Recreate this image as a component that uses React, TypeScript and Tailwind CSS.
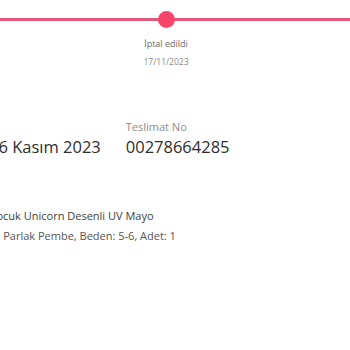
const font = { fontFamily: '"Open Sans", "Liberation Sans", sans-serif' };

const Timeline = () => (
  <div className="relative h-[72px]">
    {/* progress line */}
    <div className="absolute left-0 right-0 top-[18px] h-[3px] bg-[#e05a7c]" />
    <div className="absolute left-[158px] top-[11px] w-[17px] h-[17px] rounded-full bg-[#f7466c]" />
    <div className="absolute left-[116px] top-[37px] w-[100px] text-center">
      <p className="text-[9px] leading-[14px] text-[#6b6b6b]">İptal edildi</p>
      <p className="mt-[4px] text-[8.5px] leading-[14px] text-[#8a8a8a]">17/11/2023</p>
    </div>
  </div>
);

export default function App() {
  return (
    <div className="w-[350px] h-[350px] overflow-hidden bg-white" style={font}>
      <Timeline />

      {/* Order summary */}
      <div className="mt-[47px] flex gap-[25px] ml-[-11px]">
        <div>
          <p className="text-[11px] leading-[16px] text-[#8c8c8c] ml-[-62px]">Sipariş Tarihi</p>
          <p className="mt-[1px] text-[16.5px] leading-[22px] text-[#2e2e2e]">16 Kasım 2023</p>
        </div>
        <div>
          <p className="text-[11px] leading-[16px] text-[#8c8c8c]">Teslimat No</p>
          <p className="mt-[1px] text-[16.5px] leading-[22px] text-[#2e2e2e]">00278664285</p>
        </div>
      </div>

      {/* Product line */}
      <div className="mt-[50px] ml-[-28px]">
        <p className="text-[11px] leading-[16px] text-[#3d3d3d]">Kız Çocuk Unicorn Desenli UV Mayo</p>
        <p className="mt-[4px] text-[11px] leading-[16px] text-[#555]">Renk: Parlak Pembe, Beden: 5-6, Adet: 1</p>
      </div>
    </div>
  );
}
